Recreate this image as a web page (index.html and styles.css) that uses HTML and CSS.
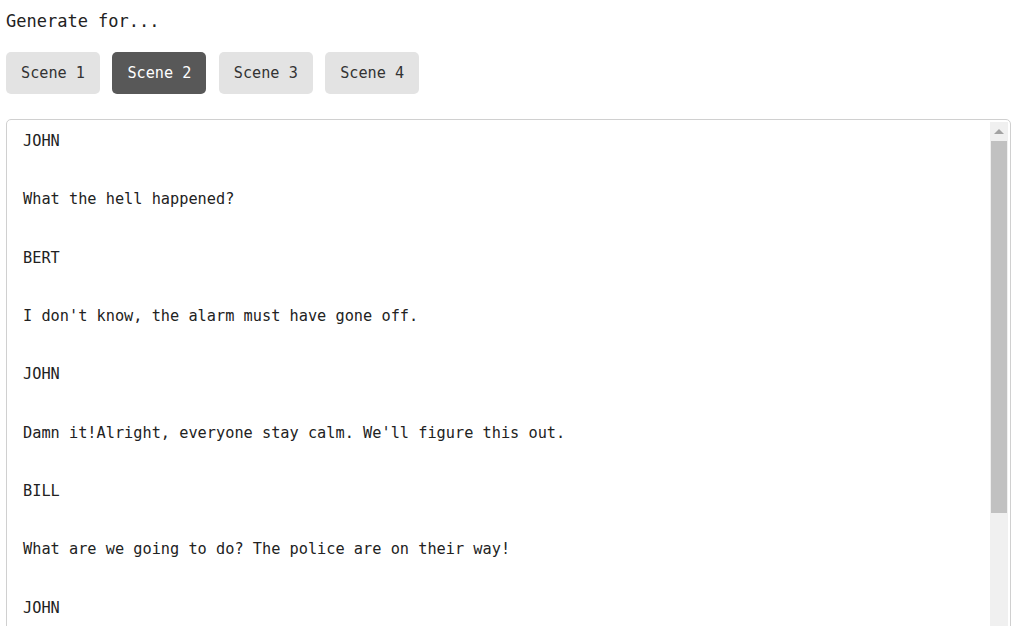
FILE: index.html
```html
<!DOCTYPE html>
<html>
<head>
<meta charset="utf-8">
<link rel="stylesheet" href="styles.css">
</head>
<body>
<div class="page">
  <div class="label">Generate for...</div>
  <div class="scenes">
    <button class="scene">Scene 1</button>
    <button class="scene active">Scene 2</button>
    <button class="scene">Scene 3</button>
    <button class="scene">Scene 4</button>
  </div>
  <div class="editor">
    <div class="script">JOHN

What the hell happened?

BERT

I don't know, the alarm must have gone off.

JOHN

Damn it!Alright, everyone stay calm. We'll figure this out.

BILL

What are we going to do? The police are on their way!

JOHN</div>
    <div class="scrollbar">
      <div class="arrow"></div>
      <div class="thumb"></div>
      <div class="track"></div>
    </div>
  </div>
</div>
</body>
</html>
```
FILE: styles.css
```css
html, body {
  margin: 0;
  padding: 0;
  background: #fff;
  overflow: hidden;
}
.page {
  padding: 8px 7px 0 6px;
  font-family: "DejaVu Sans Mono", "Liberation Mono", monospace;
  color: #222;
}
.label {
  font-size: 17px;
  line-height: 26px;
  margin-bottom: 18px;
}
.scenes {
  display: flex;
  gap: 12.4px;
  margin-bottom: 25px;
}
.scene {
  font-family: "DejaVu Sans Mono", "Liberation Mono", monospace;
  font-size: 15.2px;
  height: 42px;
  width: 94px;
  padding: 0;
  border: none;
  border-radius: 5px;
  background: #e3e3e3;
  color: #333;
}
.scene.active {
  background: #585858;
  color: #fff;
}
.editor {
  display: flex;
  height: 520px;
  border: 1px solid #d0d0d0;
  border-radius: 5px;
  overflow: hidden;
}
.script {
  flex: 1;
  white-space: pre-wrap;
  font-size: 15.28px;
  line-height: 29.17px;
  padding: 7px 16px 0 16px;
  color: #222;
}
.scrollbar {
  width: 18px;
  margin: 2px 2px 0 0;
  background: #f0f0f0;
  display: flex;
  flex-direction: column;
  align-items: center;
}
.arrow {
  height: 19px;
  width: 18px;
  display: flex;
  justify-content: center;
  align-items: center;
}
.arrow::before {
  content: "";
  border-left: 5px solid transparent;
  border-right: 5px solid transparent;
  border-bottom: 5px solid #a3a3a3;
}
.thumb {
  width: 16px;
  height: 372px;
  background: #c1c1c1;
}
.track {
  flex: 1;
}
```
